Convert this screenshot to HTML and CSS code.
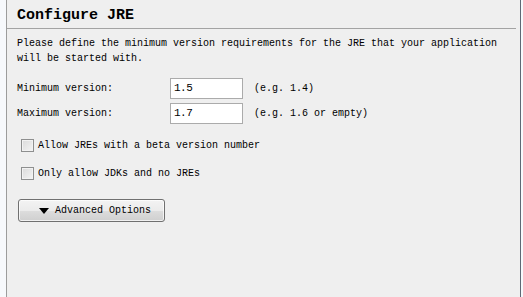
FILE: index.html
```html
<!DOCTYPE html>
<html>
<head>
<meta charset="utf-8">
<link rel="stylesheet" href="styles.css">
</head>
<body>
<div class="panel">
  <div class="header"><h1 class="title">Configure JRE</h1></div>
  <div class="content">
    <p class="desc">Please define the minimum version requirements for the JRE that your application<br>will be started with.</p>
    <div class="form">
      <div class="row">
        <span class="label">Minimum version:</span>
        <span class="input">1.5</span>
        <span class="hint">(e.g. 1.4)</span>
      </div>
      <div class="row">
        <span class="label">Maximum version:</span>
        <span class="input">1.7</span>
        <span class="hint">(e.g. 1.6 or empty)</span>
      </div>
    </div>
    <div class="checks">
      <label class="check"><span class="box"></span><span>Allow JREs with a beta version number</span></label>
      <label class="check"><span class="box"></span><span>Only allow JDKs and no JREs</span></label>
    </div>
    <div class="button">
      <svg class="tri" width="10" height="6" viewBox="0 0 10 6"><path d="M0 0H10L5 6Z" fill="#000"/></svg>
      <span>Advanced Options</span>
    </div>
  </div>
</div>
</body>
</html>
```
FILE: styles.css
```css
html, body {
  margin: 0;
  padding: 0;
  background: #f7f9fc;
  height: 297px;
  overflow: hidden;
}
body {
  font-family: "Liberation Mono", monospace;
  font-size: 10px;
  color: #000;
}
.panel {
  margin-left: 6px;
  width: 513px;
  height: 297px;
  background: #efefef;
  border-left: 1px solid #9c9c9c;
  border-right: 1px solid #5f6875;
  box-sizing: content-box;
}
.header {
  margin-right: 4px;
  border-bottom: 1px solid #a3a3a3;
  padding: 7px 0 3px 10px;
}
.title {
  margin: 0;
  font-family: "Liberation Mono", "Liberation Serif", monospace;
  font-size: 15px;
  font-weight: bold;
  line-height: 18px;
}
.content {
  padding: 0 0 0 10px;
}
.desc {
  margin: 7px 0 0 0;
  line-height: 15px;
}
.form {
  margin-top: 12px;
  display: flex;
  flex-direction: column;
  gap: 4px;
}
.row {
  display: flex;
  align-items: center;
  height: 21px;
}
.label {
  width: 153px;
}
.input {
  box-sizing: border-box;
  width: 73px;
  height: 21px;
  background: #fff;
  border: 1px solid #ababab;
  padding: 0 3px;
  line-height: 19px;
  font-size: 11px;
  letter-spacing: -0.5px;
}
.hint {
  margin-left: 11px;
}
.checks {
  margin-top: 15px;
  padding-left: 4px;
  display: flex;
  flex-direction: column;
  gap: 15px;
}
.check {
  display: flex;
  align-items: center;
  gap: 4px;
  height: 13px;
}
.box {
  box-sizing: border-box;
  width: 13px;
  height: 13px;
  border: 1px solid #8e8f8f;
  background: linear-gradient(135deg, #dadada, #f4f4f4);
  box-shadow: inset 0 0 0 1px #f2f2f2;
}
.button {
  margin-top: 19px;
  margin-left: 1px;
  box-sizing: border-box;
  width: 147px;
  height: 23px;
  border: 1px solid #707070;
  border-radius: 3px;
  background: linear-gradient(#f3f3f3 0%, #ebebeb 50%, #dddddd 51%, #cfcfcf 100%);
  box-shadow: inset 0 0 0 1px rgba(255,255,255,0.7);
  display: flex;
  align-items: center;
  padding-left: 20px;
  gap: 6px;
}
.tri {
  display: block;
}
```
